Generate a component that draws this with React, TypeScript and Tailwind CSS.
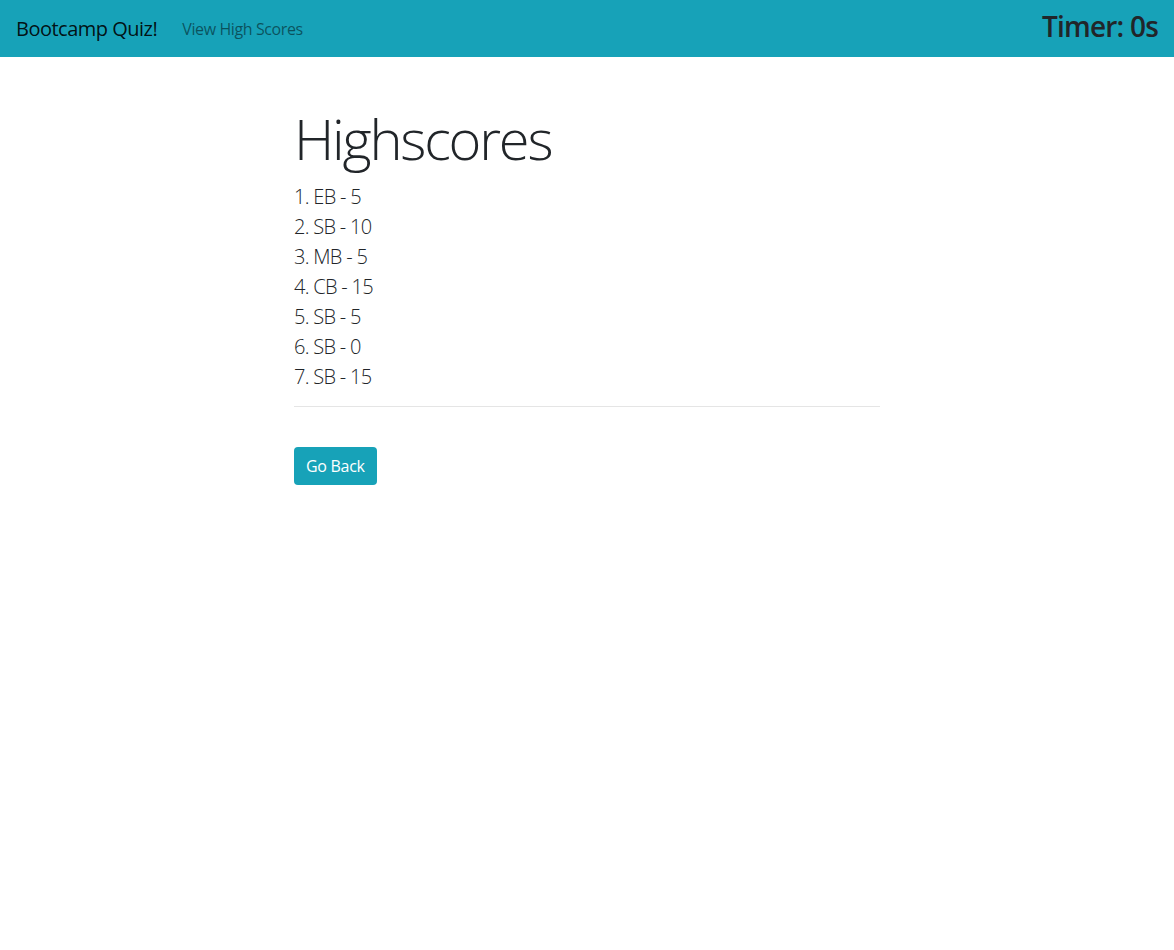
const scores = [
  { name: 'EB', score: 5 },
  { name: 'SB', score: 10 },
  { name: 'MB', score: 5 },
  { name: 'CB', score: 15 },
  { name: 'SB', score: 5 },
  { name: 'SB', score: 0 },
  { name: 'SB', score: 15 },
];

export default function App() {
  return (
    <div className="min-h-[950px] bg-white text-[#212529] font-['Open_Sans',sans-serif]">
      <nav className="flex h-[57px] items-center bg-[#17a2b8] px-4">
        <span className="mr-[25px] text-[20px] tracking-[-0.5px] text-black/90">Bootcamp Quiz!</span>
        <a href="#" className="text-[16px] tracking-[-0.4px] text-black/50">View High Scores</a>
        <h3 className="ml-auto mb-[5px] text-[28px] font-semibold tracking-[-0.8px] text-[#212529]">Timer: 0s</h3>
      </nav>
      <main className="mx-auto max-w-[586px] pt-12">
        <h1 className="mb-[10px] text-[56px] font-light leading-[1.2] tracking-[-2.2px]">Highscores</h1>
        <ol className="text-[20px] font-light leading-[30px] tracking-[-0.7px]">
          {scores.map((s, i) => (
            <li key={i}>{i + 1}. {s.name} - {s.score}</li>
          ))}
        </ol>
        <hr className="mt-[14px] mb-4 border-black/10" />
        <button className="mt-6 h-[38px] rounded bg-[#17a2b8] px-3 text-[16px] tracking-[-0.3px] text-white">Go Back</button>
      </main>
    </div>
  );
}
